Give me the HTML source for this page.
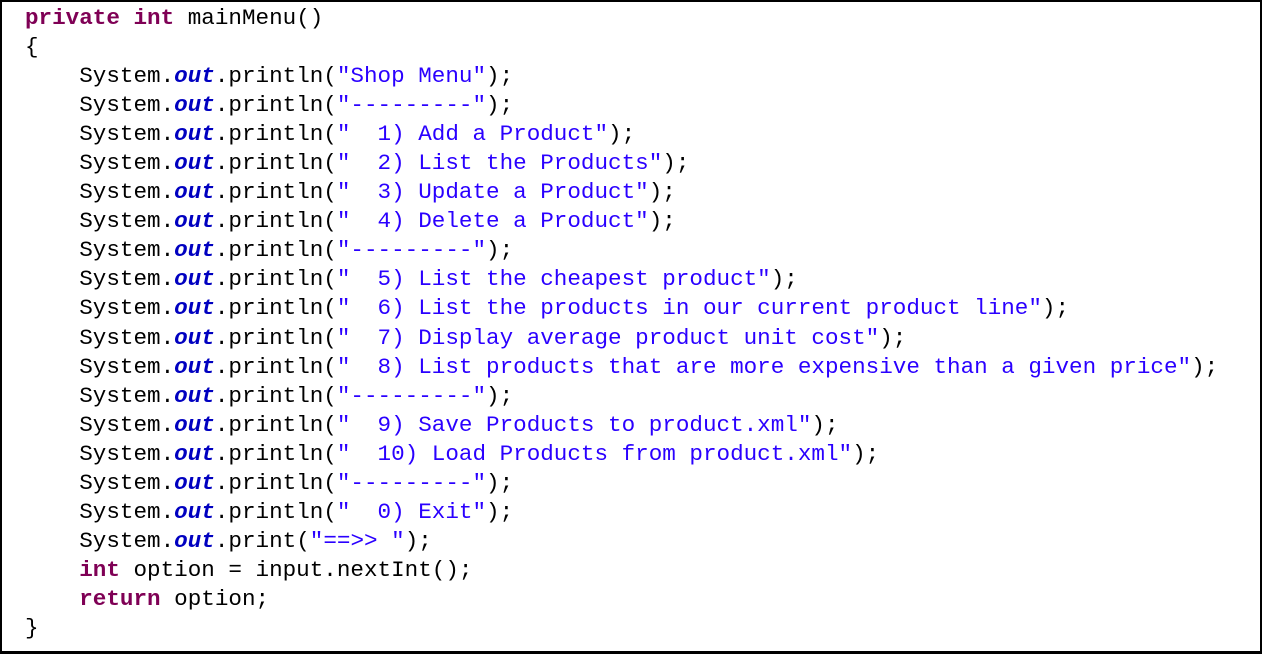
<!DOCTYPE html>
<html><head><style>
html,body{margin:0;padding:0;background:#fff;}
.box{position:absolute;left:0;top:0;width:1262px;height:654px;box-sizing:border-box;border:2px solid #000;border-bottom-width:3px;}
pre{position:absolute;left:25px;top:4px;margin:0;font-family:"Liberation Mono",monospace;font-size:22.6px;line-height:29.05px;color:#000;}
.k{color:#7f0055;font-weight:bold;}
.s{color:#2a00ff;}
.o{color:#0000c0;font-weight:bold;font-style:italic;}
</style></head><body><div class="box"></div>
<pre><span class="k">private</span> <span class="k">int</span> mainMenu()
{
    System.<span class="o">out</span>.println(<span class="s">"Shop Menu"</span>);
    System.<span class="o">out</span>.println(<span class="s">"---------"</span>);
    System.<span class="o">out</span>.println(<span class="s">"  1) Add a Product"</span>);
    System.<span class="o">out</span>.println(<span class="s">"  2) List the Products"</span>);
    System.<span class="o">out</span>.println(<span class="s">"  3) Update a Product"</span>);
    System.<span class="o">out</span>.println(<span class="s">"  4) Delete a Product"</span>);
    System.<span class="o">out</span>.println(<span class="s">"---------"</span>);
    System.<span class="o">out</span>.println(<span class="s">"  5) List the cheapest product"</span>);
    System.<span class="o">out</span>.println(<span class="s">"  6) List the products in our current product line"</span>);
    System.<span class="o">out</span>.println(<span class="s">"  7) Display average product unit cost"</span>);
    System.<span class="o">out</span>.println(<span class="s">"  8) List products that are more expensive than a given price"</span>);
    System.<span class="o">out</span>.println(<span class="s">"---------"</span>);
    System.<span class="o">out</span>.println(<span class="s">"  9) Save Products to product.xml"</span>);
    System.<span class="o">out</span>.println(<span class="s">"  10) Load Products from product.xml"</span>);
    System.<span class="o">out</span>.println(<span class="s">"---------"</span>);
    System.<span class="o">out</span>.println(<span class="s">"  0) Exit"</span>);
    System.<span class="o">out</span>.print(<span class="s">"==>> "</span>);
    <span class="k">int</span> option = input.nextInt();
    <span class="k">return</span> option;
}</pre>
</body></html>
